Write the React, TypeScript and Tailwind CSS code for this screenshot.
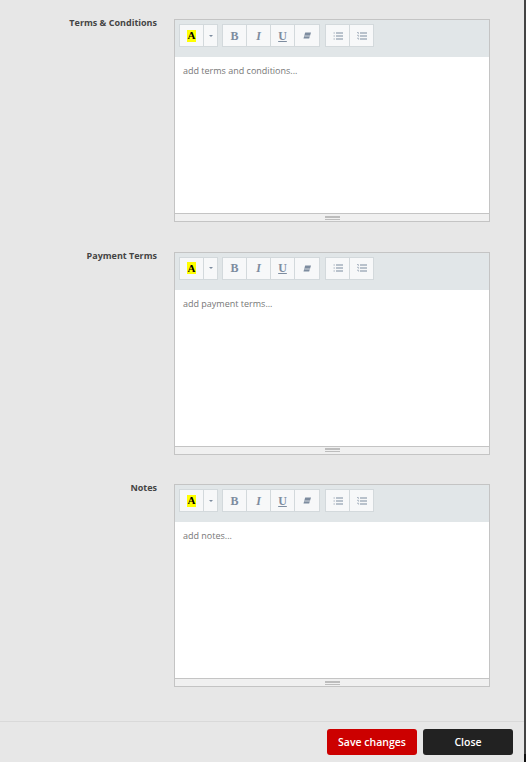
const editors = [
  { label: "Terms & Conditions", placeholder: "add terms and conditions..." },
  { label: "Payment Terms", placeholder: "add payment terms..." },
  { label: "Notes", placeholder: "add notes..." },
];

const btn = "h-[23px] flex items-center justify-center bg-[#f7f8f9] border border-[#d3d9dc] -ml-px first:ml-0";
const glyph = "font-['Liberation_Serif',serif] text-[12px] leading-none font-bold text-[#7d8c9f]";

function ListIcon({ numbered }: { numbered?: boolean }) {
  return (
    <svg width="10" height="8" viewBox="0 0 10 8" fill="none">
      <path d="M3 1h7M3 4h7M3 7h7" stroke="#7d8c9f" strokeWidth="1.1" />
      {numbered ? (
        <path d="M0 0.5h1.4v1.4M0 3.3h1.6v1.4M0 6.2h1.6v1.4" stroke="#a5b0bd" strokeWidth="0.9" />
      ) : (
        <path d="M0.5 1h1.4M0.5 4h1.4M0.5 7h1.4" stroke="#a5b0bd" strokeWidth="1.1" />
      )}
    </svg>
  );
}

function EraserIcon() {
  return (
    <svg width="8" height="7" viewBox="0 0 8 7">
      <path d="M2.2 0.5H8L6.2 6.5H0.5Z" fill="#7d8c9f" />
      <path d="M1.3 4H7" stroke="#f7f8f9" strokeWidth="0.7" />
    </svg>
  );
}

function Editor({ label, placeholder }: { label: string; placeholder: string }) {
  return (
    <div className="flex">
      <div className="w-[157px] text-right text-[9px] leading-[13px] font-bold text-[#444] mt-[-3px]">{label}</div>
      <div className="ml-[17px] w-[316px] h-[203px] flex flex-col border border-[#c4c4c4]">
        <div className="h-[37px] bg-[#e1e6e8] flex items-start pt-[4px] pl-[4px] gap-[4px]">
          <div className="flex">
            <div className={`${btn} w-[25px]`}>
              <span className="bg-[#ffff00] w-[9px] h-[12px] flex items-center justify-center text-[11px] leading-none font-bold text-black font-['Liberation_Serif',serif]">A</span>
            </div>
            <div className={`${btn} w-[15px]`}>
              <span className="w-0 h-0 border-x-[2px] border-x-transparent border-t-[2px] border-t-[#7d8c9f]" />
            </div>
          </div>
          <div className="flex">
            <div className={`${btn} w-[25px]`}><span className={glyph}>B</span></div>
            <div className={`${btn} w-[25px]`}><span className={`${glyph} italic`}>I</span></div>
            <div className={`${btn} w-[25px]`}><span className={`${glyph} underline`}>U</span></div>
            <div className={`${btn} w-[26px]`}><EraserIcon /></div>
          </div>
          <div className="flex ml-px">
            <div className={`${btn} w-[25px]`}><ListIcon /></div>
            <div className={`${btn} w-[25px]`}><ListIcon numbered /></div>
          </div>
        </div>
        <div className="flex-1 bg-white px-2 py-[7px] text-[9px] leading-[13px] text-[#777]">{placeholder}</div>
        <div className="h-[7px] box-content bg-[#f0f0f0] border-t border-[#c4c4c4] flex flex-col items-center justify-center gap-px">
          <div className="w-[15px] h-[2px] bg-[#bdbdbd]" />
          <div className="w-[15px] h-px bg-[#bdbdbd]" />
        </div>
      </div>
    </div>
  );
}

export default function App() {
  return (
    <div className="w-[526px] h-[762px] overflow-hidden bg-[#e7e7e7] flex font-['Open_Sans',sans-serif]">
      <div className="w-[524px] flex flex-col">
        <div className="flex-1 pt-[19.2px] flex flex-col gap-[29.6px]">
          {editors.map((e) => (
            <Editor key={e.label} {...e} />
          ))}
        </div>
        <div className="h-[41px] border-t border-[#d9d9d9] flex justify-end gap-[6px] pt-[7px] pr-[11px]">
          <button className="w-[90px] h-[26px] pt-px rounded-[3px] bg-[#cc0000] text-white text-[10.5px] font-semibold">Save changes</button>
          <button className="w-[90px] h-[26px] pt-px rounded-[3px] bg-[#222] text-white text-[10.5px] font-semibold">Close</button>
        </div>
      </div>
      {/* scrollbar edge */}
      <div className="w-[2px] flex flex-col bg-[#444]">
        <div className="flex-1" />
        <div className="h-[8px] bg-[#111]" />
      </div>
    </div>
  );
}
